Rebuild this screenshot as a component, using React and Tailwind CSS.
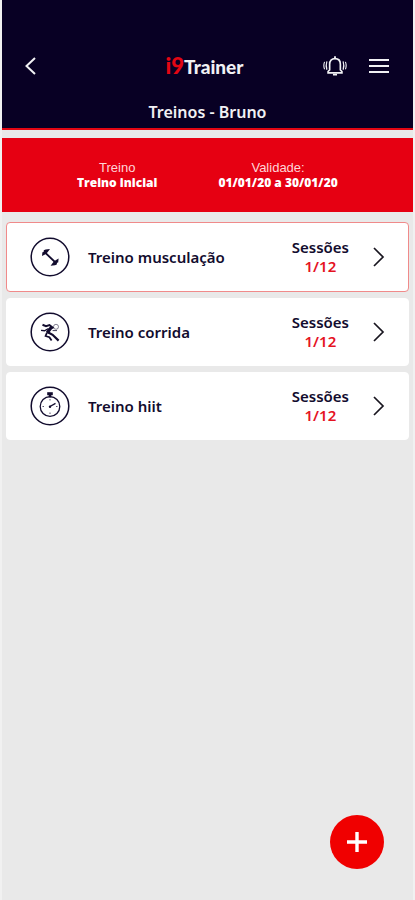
import React from 'react';

const DumbbellIcon = () => (
  <svg viewBox="0 0 40 40" className="h-10 w-10 shrink-0" fill="none" stroke="#120c2e" aria-hidden="true">
    <circle cx="20" cy="20" r="18.8" strokeWidth="1.5" />
    <path d="M15 15.5 L25.5 25.5" strokeWidth="1.8" />
    <path d="M12 19 L12.4 15.2 L13.6 15 L13.8 13.2 L15.6 12.6 L20 12 L17.6 15.2 L15 17.6 Z" fill="#120c2e" stroke="none" />
    <path d="M28.6 21.6 L28.2 25.6 L27 25.8 L26.8 27.6 L25 28.2 L20.6 28.8 L23 25.6 L25.6 23.2 Z" fill="#120c2e" stroke="none" />
  </svg>
);

const RunnerIcon = () => (
  <svg viewBox="0 0 40 40" className="h-10 w-10 shrink-0" fill="none" stroke="#120c2e" aria-hidden="true">
    <circle cx="20" cy="20" r="18.8" strokeWidth="1.5" />
    <circle cx="26" cy="14.8" r="2.5" strokeWidth="0.5" />
    <path d="M12.5 12.8 L16 14.2 L19.5 13 L23.5 16.2" strokeWidth="2" />
    <path d="M21.8 14.8 L17.2 20.8" strokeWidth="3.2" />
    <path d="M18.5 16.5 L14.5 18.8 L11 18.4" strokeWidth="1.4" />
    <path d="M17.4 20 L22.6 22.8 L28.6 28.6" strokeWidth="2.2" />
    <path d="M17 20.5 L15.6 24 L19.4 25.2 L21.6 28.6" strokeWidth="1.8" />
    <path d="M22.6 18.6 H27" strokeWidth="0.8" />
  </svg>
);

const StopwatchIcon = () => (
  <svg viewBox="0 0 40 40" className="h-10 w-10 shrink-0" fill="none" stroke="#120c2e" aria-hidden="true">
    <circle cx="20" cy="20" r="18.8" strokeWidth="1.5" />
    <circle cx="20" cy="20.5" r="9.8" strokeWidth="1.3" />
    <path d="M17.2 7.7 h5.6" strokeWidth="3" />
    <path d="M20 8 v3.5" strokeWidth="2.6" />
    <path d="M19.5 20.8 L25.5 17.4" strokeWidth="1.3" />
    <circle cx="20" cy="20.8" r="1.2" fill="#120c2e" stroke="none" />
    <path d="M20 13 v1.5 M12.5 20.5 h1.5 M26 20.5 h1.5 M20 26.5 v1.5" strokeWidth="0.7" />
  </svg>
);

const workouts = [
  { id: 1, name: 'Treino musculação', sessions: '1/12', Icon: DumbbellIcon, active: true },
  { id: 2, name: 'Treino corrida', sessions: '1/12', Icon: RunnerIcon, active: false },
  { id: 3, name: 'Treino hiit', sessions: '1/12', Icon: StopwatchIcon, active: false },
];

const Header = () => (
  <header className="border-b-2 border-[#e30613] bg-[#080024] pt-12 text-[#f1f1f4]">
    <div className="grid grid-cols-[1fr_auto_1fr] items-center pr-[22px] pl-4">
      <button type="button" aria-label="Voltar" className="flex h-9 w-7 items-center justify-center">
        <svg viewBox="0 0 20 20" className="h-5 w-5" fill="none" stroke="currentColor" strokeWidth="2">
          <path d="M13 2 L4.5 10 L13 18" />
        </svg>
      </button>
      <div className="font-['Lato',sans-serif] text-[19px] leading-8 font-black">
        <span className="text-[22px] text-[#e30613]">i9</span>Trainer
      </div>
      <div className="flex items-center justify-end gap-5">
        <button type="button" aria-label="Notificações" className="flex h-9 items-center">
          <svg viewBox="0 0 26 24" className="h-6 w-6" fill="none" stroke="currentColor" strokeWidth="1.8">
            <path d="M5.5 19.5 V18 L7.2 16.2 V10 C7.2 6.2 9.4 4 13 4 C16.6 4 18.8 6.2 18.8 10 V16.2 L20.5 18 V19.5 Z" />
            <path d="M13 1.5 V4 M10.8 21.4 H15.2" strokeWidth="2" />
            <path d="M4.2 7 C3.2 10 3.2 13 4.2 16 M21.8 7 C22.8 10 22.8 13 21.8 16" strokeWidth="1.3" />
            <path d="M1.7 7.5 C0.7 10 0.7 13 1.7 15.5 M24.3 7.5 C25.3 10 25.3 13 24.3 15.5" strokeWidth="1.2" />
          </svg>
        </button>
        <button type="button" aria-label="Menu" className="flex h-9 items-center">
          <svg viewBox="0 0 24 24" className="h-6 w-6" fill="none" stroke="currentColor" strokeWidth="2">
            <path d="M2 6 H22 M2 12 H22 M2 18 H22" />
          </svg>
        </button>
      </div>
    </div>
    <h1 className="pt-4 pb-1 text-center text-base leading-6 font-semibold">Treinos - Bruno</h1>
  </header>
);

const Summary = () => (
  <section className="mt-2 flex h-[74px] items-center gap-[61px] bg-[#e60012] pl-[75px] text-center text-xs text-white">
    <div>
      <p className="font-['Liberation_Sans',sans-serif] text-[13px] leading-[15px] text-[#ffd5d8]">Treino</p>
      <p className="font-['Open_Sans',sans-serif] leading-[15px] font-extrabold">Treino inicial</p>
    </div>
    <div>
      <p className="font-['Liberation_Sans',sans-serif] text-[13px] leading-[15px] text-[#ffd5d8]">Validade:</p>
      <p className="font-['Open_Sans',sans-serif] leading-[15px] font-extrabold">01/01/20 a 30/01/20</p>
    </div>
  </section>
);

const WorkoutCard = ({ workout }) => {
  const { Icon } = workout;
  return (
    <a
      href="#"
      className={`flex items-center rounded border bg-white pr-5 pl-[23px] text-[#120c2e] ${
        workout.active ? 'h-[70px] border-[#f08a8a]' : 'h-[68px] border-white'
      }`}
    >
      <Icon />
      <span className="ml-[18px] flex-1 text-[15px] font-semibold">{workout.name}</span>
      <span className="mr-[19px] text-center text-[15px] leading-[19px] font-semibold">
        <span className="block">Sessões</span>
        <span className="block text-[#e5131f]">{workout.sessions}</span>
      </span>
      <svg viewBox="0 0 20 20" className="h-5 w-5" fill="none" stroke="#18151f" strokeWidth="1.7" aria-hidden="true">
        <path d="M6 1 L15 10 L6 19" />
      </svg>
    </a>
  );
};

const App = () => {
  return (
    <div className="min-h-screen border-x-2 border-[#f1f1f1] bg-[#e9e9e9] font-['Noto_Sans',sans-serif]">
      <Header />
      <main>
        <Summary />
        <div className="mt-[10px] flex flex-col gap-[6px] px-1">
          {workouts.map((workout) => (
            <WorkoutCard key={workout.id} workout={workout} />
          ))}
        </div>
      </main>
      <button
        type="button"
        aria-label="Adicionar treino"
        className="fixed right-[31px] bottom-[31px] flex h-[54px] w-[54px] items-center justify-center rounded-full bg-[#f00000]"
      >
        <svg viewBox="0 0 20 20" className="h-5 w-5" fill="none" stroke="#fff" strokeWidth="3.4">
          <path d="M10 0 V20 M0 10 H20" />
        </svg>
      </button>
    </div>
  );
};

export default App;
